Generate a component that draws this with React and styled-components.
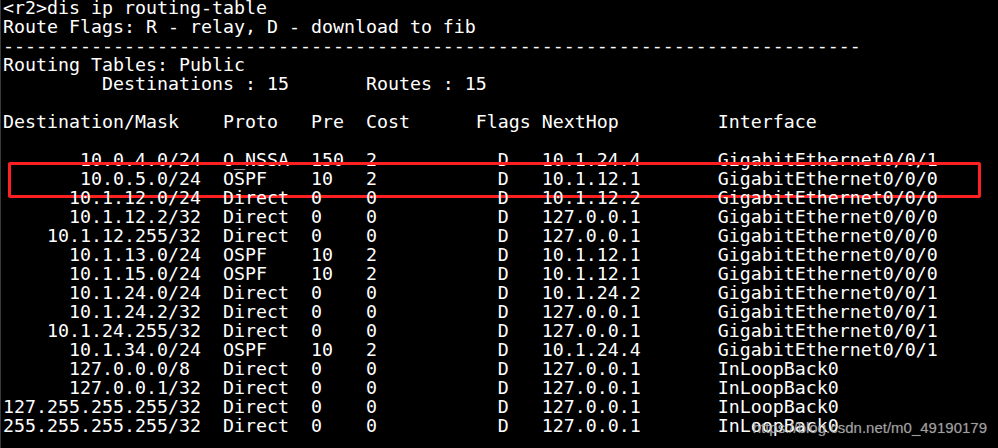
import React from "react";
import styled, { createGlobalStyle } from "styled-components";

const Global = createGlobalStyle`
  html, body { margin: 0; padding: 0; background: #000; }
  body { width: 998px; height: 448px; overflow: hidden; }
`;

const Screen = styled.div`
  position: relative;
  width: 998px;
  height: 448px;
  box-sizing: border-box;
  background: #000;
  border-left: 1px solid #3a3a3a;
  overflow: hidden;
`;

const Console = styled.div`
  display: flex;
  flex-direction: column;
  margin-top: -2px;
  padding-left: 2px;
  font-family: "DejaVu Sans Mono", "Liberation Mono", monospace;
  font-size: 18.27px;
  line-height: 19px;
  color: #fff;
  white-space: pre;
`;

const Line = styled.div`
  position: relative;
  height: 19px;
  ${(p) =>
    p.$marked &&
    `
    &::after {
      content: "";
      position: absolute;
      left: 5px;
      right: 17px;
      top: -7px;
      bottom: -10px;
      border: 3px solid #ff2121;
      border-radius: 2px;
    }
  `}
`;

const Watermark = styled.div`
  position: absolute;
  right: 11px;
  bottom: 12px;
  font-family: "Liberation Sans", Arial, sans-serif;
  font-size: 15px;
  line-height: 17px;
  color: rgba(175, 175, 175, 0.85);
  text-shadow: 0 0 1px rgba(255, 255, 255, 0.35);
`;

const routes = [
  ["10.0.4.0", "24", "O_NSSA", "150", "2", "10.1.24.4", "GigabitEthernet0/0/1"],
  ["10.0.5.0", "24", "OSPF", "10", "2", "10.1.12.1", "GigabitEthernet0/0/0", true],
  ["10.1.12.0", "24", "Direct", "0", "0", "10.1.12.2", "GigabitEthernet0/0/0"],
  ["10.1.12.2", "32", "Direct", "0", "0", "127.0.0.1", "GigabitEthernet0/0/0"],
  ["10.1.12.255", "32", "Direct", "0", "0", "127.0.0.1", "GigabitEthernet0/0/0"],
  ["10.1.13.0", "24", "OSPF", "10", "2", "10.1.12.1", "GigabitEthernet0/0/0"],
  ["10.1.15.0", "24", "OSPF", "10", "2", "10.1.12.1", "GigabitEthernet0/0/0"],
  ["10.1.24.0", "24", "Direct", "0", "0", "10.1.24.2", "GigabitEthernet0/0/1"],
  ["10.1.24.2", "32", "Direct", "0", "0", "127.0.0.1", "GigabitEthernet0/0/1"],
  ["10.1.24.255", "32", "Direct", "0", "0", "127.0.0.1", "GigabitEthernet0/0/1"],
  ["10.1.34.0", "24", "OSPF", "10", "2", "10.1.24.4", "GigabitEthernet0/0/1"],
  ["127.0.0.0", "8", "Direct", "0", "0", "127.0.0.1", "InLoopBack0"],
  ["127.0.0.1", "32", "Direct", "0", "0", "127.0.0.1", "InLoopBack0"],
  ["127.255.255.255", "32", "Direct", "0", "0", "127.0.0.1", "InLoopBack0"],
  ["255.255.255.255", "32", "Direct", "0", "0", "127.0.0.1", "InLoopBack0"],
];

const fmt = ([ip, mask, proto, pre, cost, hop, iface]) =>
  ip.padStart(15) +
  ("/" + mask).padEnd(3) +
  "  " +
  proto.padEnd(8) +
  pre.padEnd(5) +
  cost.padEnd(12) +
  "D".padEnd(4) +
  hop.padEnd(16) +
  iface;

const header = [
  "<r2>dis ip routing-table",
  "Route Flags: R - relay, D - download to fib",
  "-".repeat(78),
  "Routing Tables: Public",
  "         Destinations : 15       Routes : 15",
  "",
  "Destination/Mask    Proto   Pre  Cost      Flags NextHop         Interface",
  "",
];

export default function App() {
  return (
    <>
      <Global />
      <Screen>
        <Console>
          {header.map((t, i) => (
            <Line key={"h" + i}>{t}</Line>
          ))}
          {routes.map((r, i) => (
            <Line key={"r" + i} $marked={r[7]}>
              {fmt(r)}
            </Line>
          ))}
        </Console>
        <Watermark>https://blog.csdn.net/m0_49190179</Watermark>
      </Screen>
    </>
  );
}
